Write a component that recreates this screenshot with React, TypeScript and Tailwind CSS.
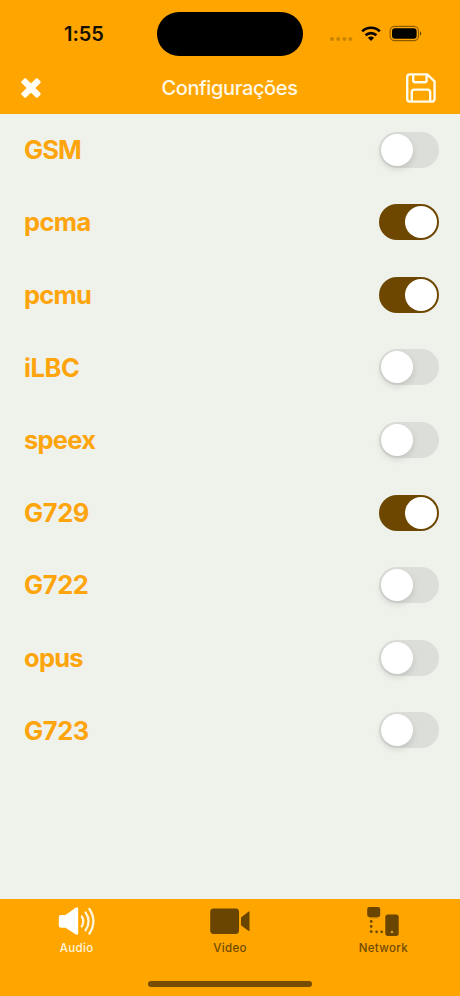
import { useState } from "react";

const CODECS = [
  { name: "GSM", on: false, tracking: "tracking-[-0.9px]" },
  { name: "pcma", on: true, tracking: "tracking-[-0.65px]" },
  { name: "pcmu", on: true, tracking: "tracking-[-0.75px]" },
  { name: "iLBC", on: false, tracking: "tracking-[-0.4px]" },
  { name: "speex", on: false, tracking: "tracking-[-0.75px]" },
  { name: "G729", on: true, tracking: "tracking-[-0.4px]" },
  { name: "G722", on: false, tracking: "tracking-[-0.4px]" },
  { name: "opus", on: false, tracking: "tracking-[-0.75px]" },
  { name: "G723", on: false, tracking: "tracking-[-0.4px]" },
];

function Toggle({ on, label, onToggle }: { on: boolean; label: string; onToggle: () => void }) {
  return (
    <button
      role="switch"
      aria-checked={on}
      aria-label={label}
      onClick={onToggle}
      className={`flex h-9 w-[60px] items-center rounded-full px-[2px] ${
        on ? "justify-end bg-[#6d4700]" : "justify-start bg-[#dcded9]"
      }`}
    >
      <span
        className={`size-8 rounded-full bg-white ${
          on ? "" : "shadow-[0_3px_7px_rgba(0,0,0,0.13)]"
        }`}
      />
    </button>
  );
}

function StatusBar() {
  return (
    <div className="flex h-[62px] items-start">
      <div className="flex h-[68px] w-[157px] items-center pl-[64px]">
        <span className="text-[20px] leading-none font-semibold tracking-[-0.05px] text-[#170f00]">1:55</span>
      </div>
      <div className="mt-[12px] h-[44px] w-[146px] rounded-full bg-black" />
      <svg className="mt-[22px] ml-[25px]" width="96" height="24" viewBox="328 22 96 24" fill="none">
        <g fill="#c98500">
          <circle cx="332" cy="39" r="2" />
          <circle cx="338.2" cy="39" r="2" />
          <circle cx="344.4" cy="39" r="2" />
          <circle cx="350.4" cy="39" r="2" />
        </g>
        <g stroke="#080500" strokeWidth="2.7">
          <path d="M362.2 31.4a12.4 12.4 0 0 1 17.6 0" />
          <path d="M365.6 35.3a7.7 7.7 0 0 1 10.8 0" />
        </g>
        <path d="M367.9 37.8a4.6 4.6 0 0 1 6.2 0L371 40.9Z" fill="#080500" />
        <rect x="390.1" y="26.4" width="28.4" height="14.2" rx="4.6" stroke="#8f5d00" strokeWidth="1.1" />
        <rect x="392" y="28.3" width="24.6" height="10.4" rx="3" fill="#050300" />
        <path d="M420 31.3c1.8.7 1.8 3.7 0 4.4Z" fill="#6b4500" />
      </svg>
    </div>
  );
}

function NavBar() {
  return (
    <div className="flex h-[52px] items-center justify-between pr-[23px] pl-[20px]">
      <button aria-label="Fechar" className="flex w-[34px]">
        <svg width="22" height="22" viewBox="0 0 22 22" fill="#fffdf5" stroke="#fffdf5" strokeWidth="2.4" strokeLinejoin="round">
          <path d="M5.2 2.4L11 8.2L16.8 2.4L19.6 5.2L13.8 11L19.6 16.8L16.8 19.6L11 13.8L5.2 19.6L2.4 16.8L8.2 11L2.4 5.2Z" />
        </svg>
      </button>
      <h1 className="text-[20px] leading-none font-medium tracking-[-0.37px] text-[#fff8e6]">Configurações</h1>
      <button aria-label="Salvar">
        <svg
          width="32"
          height="32"
          viewBox="0 0 32 32"
          fill="none"
          stroke="#fffbea"
          strokeWidth="2.4"
          strokeLinejoin="round"
        >
          <path d="M5 2.4H22.2L29.6 9.3V26.8a2.8 2.8 0 0 1-2.8 2.8H5a2.8 2.8 0 0 1-2.8-2.8V5.2A2.8 2.8 0 0 1 5 2.4Z" />
          <path d="M8.2 2.4V8.3a2 2 0 0 0 2 2H19.6a2 2 0 0 0 2-2V2.4" />
          <path d="M6.8 29.6V20a2.4 2.4 0 0 1 2.4-2.4H22.8A2.4 2.4 0 0 1 25.2 20V29.6" />
        </svg>
      </button>
    </div>
  );
}

function AudioIcon() {
  return (
    <svg width="40" height="32" viewBox="57 905 40 32" fill="none">
      <path
        d="M61 915H65.5L75.5 907.8Q78.2 906.4 78.2 909V933Q78.2 935.6 75.5 934.2L65.5 927.8H61Q58.8 927.8 58.8 925.6V917.2Q58.8 915 61 915Z"
        fill="#fff"
      />
      <g stroke="#fff4dc" strokeWidth="2.3" strokeLinecap="round">
        <path d="M81.8 916.4q3 5 0 10" />
        <path d="M85.5 912.4q6.2 9 0 18" />
        <path d="M89.4 909q8 12.2 0 24.6" />
      </g>
    </svg>
  );
}

function VideoIcon() {
  return (
    <svg width="42" height="32" viewBox="209 905 42 32" fill="#694500">
      <rect x="210.2" y="908.6" width="28.8" height="25.4" rx="3.4" />
      <path d="M241 917.4L248.7 911.4Q249.5 911 249.5 912V930.4Q249.5 931.4 248.7 931L241 925.3Z" />
    </svg>
  );
}

function NetworkIcon() {
  return (
    <svg width="36" height="32" viewBox="365 905 36 32" fill="#694500">
      <rect x="367.2" y="907.1" width="13" height="10" rx="2" />
      <path d="M370 917h7.4l1 1.2h-9.4Z" opacity=".45" />
      <rect x="385.3" y="914.6" width="13.4" height="21.3" rx="2.6" />
      <path d="M390.4 932.8l1.6-2.2 1.6 2.2Z" fill="#ffb93c" />
      <g>
        <circle cx="371.2" cy="921.4" r="1.35" />
        <circle cx="371.2" cy="926.4" r="1.35" />
        <circle cx="371.2" cy="931.6" r="1.45" />
        <circle cx="376.6" cy="931.8" r="1.35" />
        <circle cx="381.7" cy="931.8" r="1.35" />
      </g>
    </svg>
  );
}

const TABS = [
  { label: "Audio", Icon: AudioIcon, color: "text-[#fff5dc]" },
  { label: "Video", Icon: VideoIcon, color: "text-[#704a00]" },
  { label: "Network", Icon: NetworkIcon, color: "text-[#704a00]" },
];

export default function App() {
  const [codecs, setCodecs] = useState(CODECS);
  const toggle = (name: string) =>
    setCodecs((list) => list.map((c) => (c.name === name ? { ...c, on: !c.on } : c)));

  return (
    <div className="flex h-[996px] w-[460px] flex-col overflow-hidden bg-[#eff2eb] font-['Inter',sans-serif]">
      <header className="h-[114px] shrink-0 bg-[#ffa500]">
        <StatusBar />
        <NavBar />
      </header>
      <main className="flex-1">
        <ul className="-mt-[0.7px]">
          {codecs.map((c) => (
            <li key={c.name} className="flex h-[72.6px] items-center justify-between pr-[21px] pl-[24px]">
              <span className={`text-[25.5px] leading-none font-bold text-[#fea40c] ${c.tracking}`}>{c.name}</span>
              <Toggle on={c.on} label={c.name} onToggle={() => toggle(c.name)} />
            </li>
          ))}
        </ul>
      </main>
      <footer className="flex h-[97px] shrink-0 flex-col justify-between bg-[#ffa500]">
        <nav className="grid grid-cols-3 pt-[6px]">
          {TABS.map(({ label, Icon, color }) => (
            <button key={label} className="flex flex-col items-center">
              <Icon />
              <span className={`mt-[5px] text-[11.5px] leading-3 font-medium tracking-[0.35px] ${color}`}>{label}</span>
            </button>
          ))}
        </nav>
        <div className="mb-[9px] h-[6px] w-[164px] self-center rounded-full bg-[#764c00]" />
      </footer>
    </div>
  );
}
